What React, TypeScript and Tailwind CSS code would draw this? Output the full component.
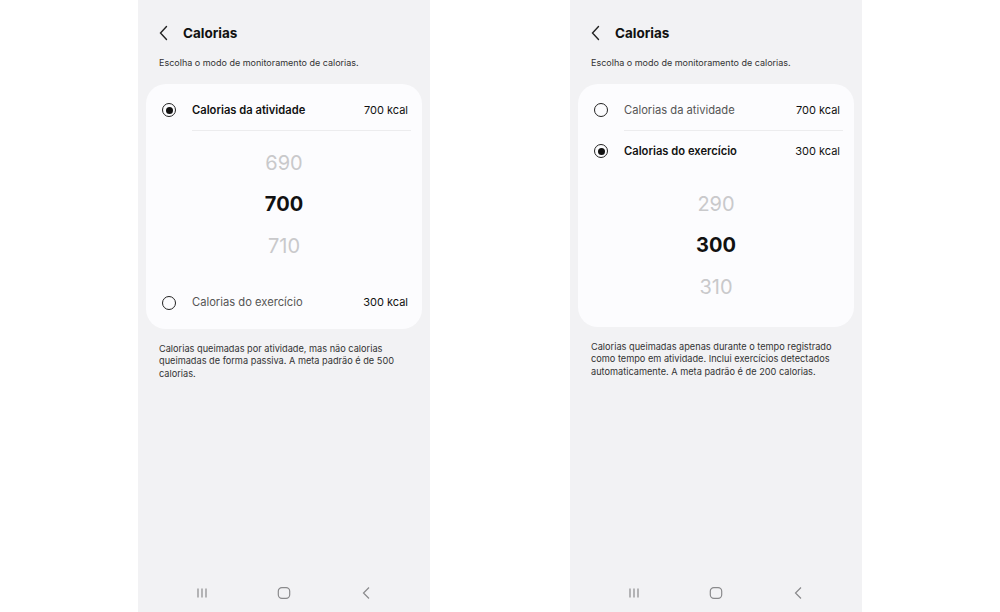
import React from "react";

type Opt = { label: string; value: string };

function Radio({ on }: { on: boolean }) {
  return (
    <span className="flex h-[14px] w-[14px] shrink-0 items-center justify-center rounded-full border-[1.5px] border-[#222]">
      {on && <span className="block h-[7px] w-[7px] rounded-full bg-[#111]" />}
    </span>
  );
}

function Row({ opt, on }: { opt: Opt; on: boolean }) {
  return (
    <div className="flex h-[40px] items-center pl-[16px] pr-[14px]">
      <Radio on={on} />
      <span
        className={
          on
            ? "ml-[16px] flex-1 text-[11.2px] font-semibold text-[#111]"
            : "ml-[16px] flex-1 text-[11.2px] text-[#555]"
        }
      >
        {opt.label}
      </span>
      <span className="text-[11px] text-[#111]">{opt.value}</span>
    </div>
  );
}

function Picker({ nums, pt, pb }: { nums: string[]; pt: string; pb: string }) {
  return (
    <div className={`flex flex-col items-center ${pt} ${pb}`}>
      {nums.map((n, i) => (
        <div
          key={n}
          className={
            i === 1
              ? "flex h-[41.5px] items-center text-[20px] font-bold text-[#111]"
              : "flex h-[41.5px] items-center text-[20px] text-[#c9c9cb]"
          }
        >
          {n}
        </div>
      ))}
    </div>
  );
}

function NavBar() {
  return (
    <div className="mt-auto flex h-[38px] items-center justify-center gap-[62px] pb-[1px]">
      <svg width="20" height="12" viewBox="0 0 20 12" className="text-[#8a8a8c]">
        <path d="M6 1.5v9M10 1.5v9M14 1.5v9" stroke="currentColor" strokeWidth="1.2" fill="none" />
      </svg>
      <svg width="20" height="14" viewBox="0 0 20 14" className="text-[#8a8a8c]">
        <rect x="4.3" y="1.6" width="11.4" height="10.8" rx="3.6" stroke="currentColor" strokeWidth="1.2" fill="none" />
      </svg>
      <svg width="20" height="14" viewBox="0 0 20 14" className="text-[#8a8a8c]">
        <path d="M13 1.5L7.5 7l5.5 5.5" stroke="currentColor" strokeWidth="1.2" fill="none" />
      </svg>
    </div>
  );
}

function Phone({ second }: { second: boolean }) {
  const a: Opt = { label: "Calorias da atividade", value: "700 kcal" };
  const b: Opt = { label: "Calorias do exercício", value: "300 kcal" };
  return (
    <div className="flex h-[612px] w-[292px] flex-col bg-[#f2f2f4]">
      <div className="mt-[24px] flex h-[18px] items-center pl-[20px]">
        <svg width="12" height="16" viewBox="0 0 12 16">
          <path d="M8.5 1.5L2.5 8l6 6.5" stroke="#222" strokeWidth="1.4" fill="none" strokeLinecap="round" />
        </svg>
        <span className="ml-[13px] text-[13.5px] font-bold text-[#111]">Calorias</span>
      </div>
      <p className="mt-[15px] px-[21px] text-[9px] leading-[12px] text-[#333]">
        Escolha o modo de monitoramento de calorias.
      </p>
      <div className="mx-[8px] mt-[15px] rounded-[20px] bg-[#fcfcfe] pt-[6px] pb-[1px]">
        <Row opt={a} on={!second} />
        <div className="ml-[46px] mr-[11px] h-px bg-[#ececee]" />
        {second ? (
          <>
            <Row opt={b} on />
            <Picker nums={["290", "300", "310"]} pt="pt-[12px]" pb="pb-[18px]" />
          </>
        ) : (
          <>
            <Picker nums={["690", "700", "710"]} pt="pt-[11px]" pb="pb-[16px]" />
            <Row opt={b} on={false} />
            <div className="h-[5px]" />
          </>
        )}
      </div>
      <p className="mt-[14px] pl-[21px] pr-[18px] text-[9.2px] leading-[12.5px] text-[#333]">
        {second ? (
          <>
            Calorias queimadas apenas durante o tempo registrado
            <br />
            como tempo em atividade. Inclui exercícios detectados
            <br />
            automaticamente. A meta padrão é de 200 calorias.
          </>
        ) : (
          <>
            Calorias queimadas por atividade, mas não calorias
            <br />
            queimadas de forma passiva. A meta padrão é de 500
            <br />
            calorias.
          </>
        )}
      </p>
      <NavBar />
    </div>
  );
}

export default function App() {
  return (
    <div
      className="flex h-[612px] w-[1000px] justify-center gap-[140px] bg-white"
      style={{ fontFamily: "Inter, 'Noto Sans', sans-serif" }}
    >
      <Phone second={false} />
      <Phone second />
    </div>
  );
}
